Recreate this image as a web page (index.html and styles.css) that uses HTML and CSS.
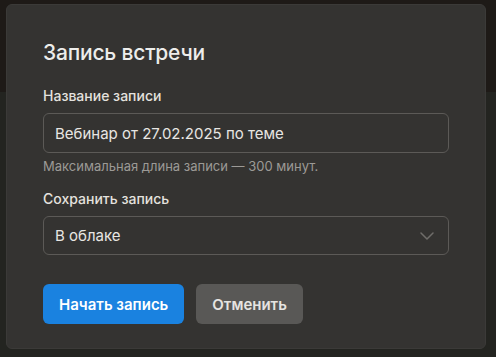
FILE: index.html
```html
<!DOCTYPE html>
<html lang="ru">
<head>
    <meta charset="UTF-8">
    <meta name="viewport" content="width=device-width, initial-scale=1.0">
    <title>Запись встречи</title>
    <link rel="stylesheet" href="styles.css">
</head>
<body>
    <div class="page">
        <div class="topbar"></div>
        <div class="stage"></div>
    </div>

    <div class="dialog">
        <h1>Запись встречи</h1>
        <div class="form-group">
            <label for="name">Название записи</label>
            <input type="text" id="name" value="Вебинар от 27.02.2025 по теме">
            <div class="hint">Максимальная длина записи — 300 минут.</div>
        </div>
        <div class="form-group">
            <label for="save">Сохранить запись</label>
            <div class="select" id="save">
                <span>В облаке</span>
                <svg class="chevron" width="14" height="8" viewBox="0 0 14 8">
                    <path d="M1 1l6 6 6-6" fill="none" stroke="#6f6d6a" stroke-width="1.5" stroke-linecap="round" stroke-linejoin="round"/>
                </svg>
            </div>
        </div>
        <div class="actions">
            <button class="primary">Начать запись</button>
            <button class="secondary">Отменить</button>
        </div>
    </div>
</body>
</html>
```

FILE: styles.css
```css
body {
    margin: 0;
    font-family: Inter, "Noto Sans", sans-serif;
    background-color: #222320;
    overflow: hidden;
}
.page {
    height: 357px;
    display: flex;
    flex-direction: column;
}
.topbar {
    height: 92px;
    background-color: #1e1a17;
}
.stage {
    flex: 1;
    background-color: #232420;
}
.dialog {
    position: absolute;
    left: 6px;
    top: 4px;
    width: 480px;
    height: 345px;
    box-sizing: border-box;
    padding: 33px 36px 0;
    background-color: #343331;
    border: 1px solid #3b3a38;
    border-radius: 6px;
    color: #e8e6e3;
}
h1 {
    margin: 0 0 19px;
    font-size: 21px;
    line-height: 30px;
    font-weight: 500;
    letter-spacing: -0.2px;
    color: #ededeb;
}
.form-group {
    margin-bottom: 16px;
}
label {
    display: block;
    margin-bottom: 8px;
    font-size: 14px;
    line-height: 18px;
    font-weight: 500;
    color: #e4e2df;
}
input[type="text"], .select {
    width: 100%;
    height: 40px;
    padding: 0 11px;
    box-sizing: border-box;
    background-color: #343331;
    border: 1.5px solid #5c5a57;
    border-radius: 6px;
    color: #e8e6e3;
    font-family: inherit;
    font-size: 15px;
    outline: none;
}
.select {
    display: flex;
    align-items: center;
    justify-content: space-between;
    height: 39px;
    padding-right: 14px;
}
.hint {
    margin-top: 5px;
    font-size: 13px;
    line-height: 16px;
    color: #9c9a96;
}
.actions {
    display: flex;
    gap: 12px;
    margin-top: 29px;
}
button {
    height: 40px;
    padding: 0 16px;
    border: none;
    border-radius: 6px;
    font-family: inherit;
    font-size: 15px;
    font-weight: 600;
    cursor: pointer;
}
.primary {
    background-color: #1a82e0;
    color: #ffffff;
}
.secondary {
    background-color: #595856;
    color: #e6e4e1;
}
```
